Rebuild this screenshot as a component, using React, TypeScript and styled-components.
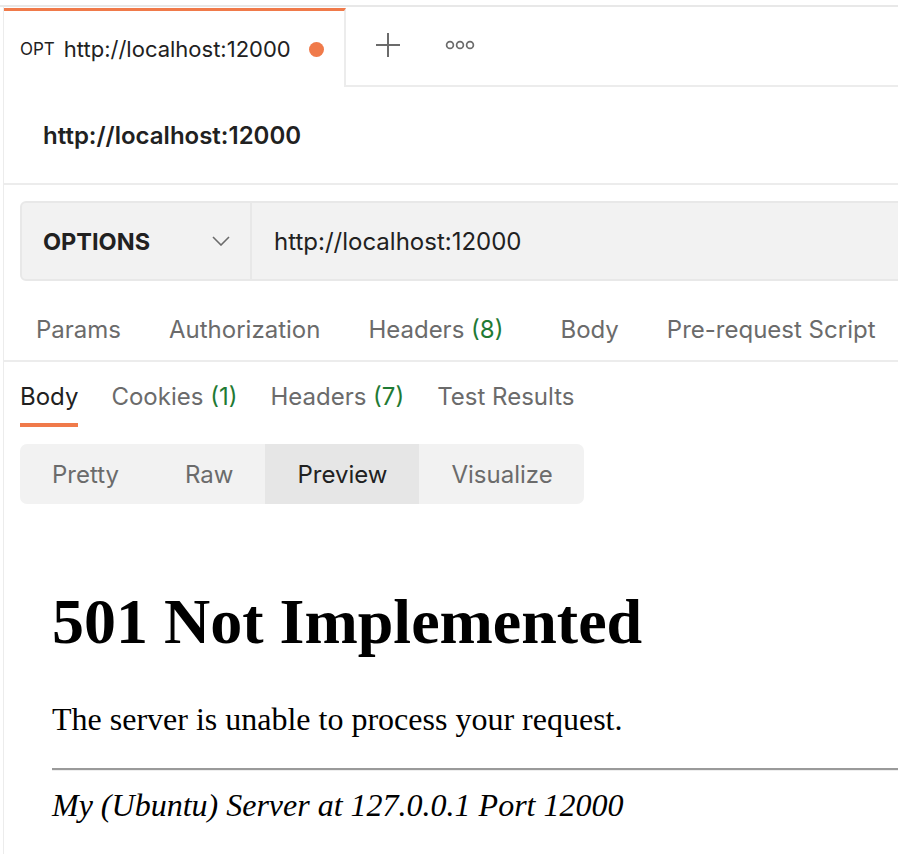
import React from "react";
import styled, { createGlobalStyle } from "styled-components";

const Global = createGlobalStyle`
  html, body { margin: 0; padding: 0; background: #ffffff; }
  body { font-family: Inter, "Noto Sans", sans-serif; color: #212121; overflow: hidden; }
  * { box-sizing: border-box; }
`;

const Frame = styled.div`
  margin-top: 5px;
  border-top: 2px solid #e8e8e8;
  width: 898px;
  height: 849px;
  overflow: hidden;
`;

const Main = styled.div`
  margin-left: 3px;
  border-left: 1px solid #ececec;
  height: 100%;
`;

const TabBar = styled.div`
  display: flex;
  align-items: stretch;
  height: 80px;
`;

const ActiveTab = styled.div`
  display: flex;
  align-items: center;
  width: 342px;
  padding: 0 16px 0 16px;
  margin-top: 1px;
  border-top: 3px solid #f07a4a;
  border-right: 2px solid #ececec;
`;

const Method = styled.span`
  font-size: 17px;
  color: #212121;
  margin-right: 9px;
`;

const TabTitle = styled.span`
  font-size: 22px;
  color: #212121;
  flex: 1;
  margin-top: -1px;
  white-space: nowrap;
`;

const Dot = styled.span`
  width: 15px;
  height: 15px;
  border-radius: 50%;
  background: #f07a4a;
  margin-right: 4px;
  flex: none;
`;

const TabRest = styled.div`
  flex: 1;
  display: flex;
  align-items: center;
  border-bottom: 2px solid #ececec;
  padding-left: 29px;
  gap: 44px;
`;

const IconBtn = styled.span`
  display: flex;
  align-items: center;
  color: #6b6b6b;
  margin-top: -2px;
`;

const HeaderRow = styled.div`
  height: 98px;
  display: flex;
  align-items: center;
  padding-left: 39px;
  border-bottom: 2px solid #ececec;
  font-size: 24px;
  font-weight: 600;
  color: #212121;
`;

const Content = styled.div`
  padding: 16px 0 0 16px;
`;

const RequestBar = styled.div`
  display: flex;
  height: 80px;
  margin-right: -20px;
  background: #f2f2f2;
  border: 2px solid #e8e8e8;
  border-radius: 6px;
`;

const MethodSelect = styled.div`
  width: 230px;
  display: flex;
  align-items: center;
  justify-content: space-between;
  padding: 0 20px 0 21px;
  border-right: 2px solid #e8e8e8;
  font-size: 23.5px;
  font-weight: 700;
  color: #212121;
`;

const UrlText = styled.div`
  display: flex;
  align-items: center;
  padding-left: 22px;
  font-size: 24px;
  color: #212121;
  white-space: nowrap;
`;

const ReqTabs = styled.div`
  display: flex;
  height: 81px;
  align-items: flex-start;
  gap: 48px;
  margin-left: -16px;
  padding: 34px 0 0 32px;
  border-bottom: 2px solid #ececec;
`;

const Tab = styled.span<{ $active?: boolean; $extra?: number }>`
  font-size: 24px;
  line-height: 29px;
  color: ${(p) => (p.$active ? "#212121" : "#6b6b6b")};
  white-space: nowrap;
  margin-right: ${(p) => p.$extra ?? 0}px;
`;

const Count = styled.span`
  color: #1f7a34;
`;

const ResTabs = styled.div`
  display: flex;
  gap: 33px;
  padding-top: 19px;
`;

const ResTab = styled.div<{ $active?: boolean }>`
  display: flex;
  flex-direction: column;
  height: 46px;
  padding-top: 1px;
  border-bottom: 4px solid ${(p) => (p.$active ? "#f07a4a" : "transparent")};
`;

const Segment = styled.div`
  display: inline-flex;
  height: 60px;
  margin-top: 17px;
  background: #f2f2f2;
  border-radius: 7px;
  overflow: hidden;
`;

const SegItem = styled.div<{ $active?: boolean; $right?: number }>`
  display: flex;
  align-items: center;
  padding: 0 ${(p) => p.$right ?? 32}px 0 32px;
  font-size: 24px;
  color: ${(p) => (p.$active ? "#212121" : "#6b6b6b")};
  background: ${(p) => (p.$active ? "#e6e6e6" : "transparent")};
`;

const Preview = styled.div`
  display: flow-root;
  padding: 38px 0 0 32px;
  margin-right: -30px;
  font-family: "Liberation Serif", "Times New Roman", serif;
  color: #000;
`;

const H1 = styled.h1`
  font-size: 64px;
  font-weight: 700;
  margin: 43px 0 42px;
`;

const P = styled.p`
  font-size: 32px;
  margin: 0 0 30px;
`;

const Hr = styled.hr`
  margin: 0 0 16px;
  border: none;
  border-top: 2px solid #9a9a9a;
  border-bottom: 1px solid #eeeeee;
  height: 0;
`;

const Address = styled.address`
  font-size: 32px;
  font-style: italic;
`;

export default function App() {
  return (
    <>
      <Global />
      <Frame>
        <Main>
          <TabBar>
            <ActiveTab>
              <Method>OPT</Method>
              <TabTitle>http://localhost:12000</TabTitle>
              <Dot />
            </ActiveTab>
            <TabRest>
              <IconBtn>
                <svg width="26" height="26" viewBox="0 0 26 26">
                  <path d="M13 1v24M1 13h24" stroke="#6b6b6b" strokeWidth="2" fill="none" />
                </svg>
              </IconBtn>
              <IconBtn>
                <svg width="30" height="10" viewBox="0 0 30 10">
                  <circle cx="5" cy="5" r="3.4" stroke="#6b6b6b" strokeWidth="1.7" fill="none" />
                  <circle cx="15" cy="5" r="3.4" stroke="#6b6b6b" strokeWidth="1.7" fill="none" />
                  <circle cx="25" cy="5" r="3.4" stroke="#6b6b6b" strokeWidth="1.7" fill="none" />
                </svg>
              </IconBtn>
            </TabRest>
          </TabBar>
          <HeaderRow>http://localhost:12000</HeaderRow>
          <Content>
            <RequestBar>
              <MethodSelect>
                <span>OPTIONS</span>
                <svg width="18" height="10" viewBox="0 0 18 10">
                  <path d="M1 1l8 8 8-8" stroke="#6b6b6b" strokeWidth="1.6" fill="none" />
                </svg>
              </MethodSelect>
              <UrlText>http://localhost:12000</UrlText>
            </RequestBar>
            <ReqTabs>
              <Tab>Params</Tab>
              <Tab>Authorization</Tab>
              <Tab $extra={9}>
                Headers <Count>(8)</Count>
              </Tab>
              <Tab>Body</Tab>
              <Tab>Pre-request Script</Tab>
            </ReqTabs>
            <ResTabs>
              <ResTab $active>
                <Tab $active>Body</Tab>
              </ResTab>
              <ResTab>
                <Tab>
                  Cookies <Count>(1)</Count>
                </Tab>
              </ResTab>
              <ResTab>
                <Tab>
                  Headers <Count>(7)</Count>
                </Tab>
              </ResTab>
              <ResTab>
                <Tab>Test Results</Tab>
              </ResTab>
            </ResTabs>
            <Segment>
              <SegItem $right={34}>Pretty</SegItem>
              <SegItem>Raw</SegItem>
              <SegItem $active>Preview</SegItem>
              <SegItem $right={31}>Visualize</SegItem>
            </Segment>
            <Preview>
              <H1>501 Not Implemented</H1>
              <P>The server is unable to process your request.</P>
              <Hr />
              <Address>My (Ubuntu) Server at 127.0.0.1 Port 12000</Address>
            </Preview>
          </Content>
        </Main>
      </Frame>
    </>
  );
}
